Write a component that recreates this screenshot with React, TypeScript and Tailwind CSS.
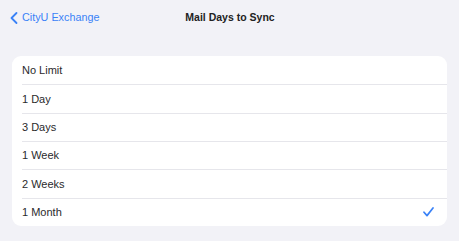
import { ChevronLeft } from 'lucide-react'

const options = ['No Limit', '1 Day', '3 Days', '1 Week', '2 Weeks', '1 Month']

export default function App() {
  const selected = '1 Month'

  return (
    <div className="w-[459px] h-[241px] bg-[#f2f2f7] font-['Liberation_Sans',Arial,sans-serif] text-[#1c1c1e] overflow-hidden">
      <div className="relative h-[34px] flex items-center">
        <button className="flex items-center text-[#3a82f7] pl-[4px] pt-[1px]">
          <ChevronLeft size={20} strokeWidth={2.2} className="-mr-[2px]" />
          <span className="text-[10.8px]">CityU Exchange</span>
        </button>
        <div className="absolute inset-x-0 top-0 h-[34px] flex items-center justify-center pointer-events-none">
          <span className="text-[10.5px] font-bold text-[#222] pl-[1px] pt-[1px]">Mail Days to Sync</span>
        </div>
      </div>

      <div className="mx-[12px] mt-[22px] bg-white rounded-[9px] overflow-hidden">
        {options.map((opt, i) => (
          <div key={opt} className="pl-[10px] h-[28.33px]">
            <div
              className={`h-full flex items-center justify-between pr-[13px] ${i > 0 ? 'border-t border-[#e6e6eb]' : ''}`}
            >
              <span className="text-[11px] text-[#2a2a2c]">{opt}</span>
              {opt === selected && (
                <svg width="11" height="10" viewBox="0 0 11 10" fill="none">
                  <path d="M1 5.2 L4 8.6 L10 1" stroke="#3a82f7" strokeWidth="1.7" strokeLinecap="round" strokeLinejoin="round" />
                </svg>
              )}
            </div>
          </div>
        ))}
      </div>
    </div>
  )
}
